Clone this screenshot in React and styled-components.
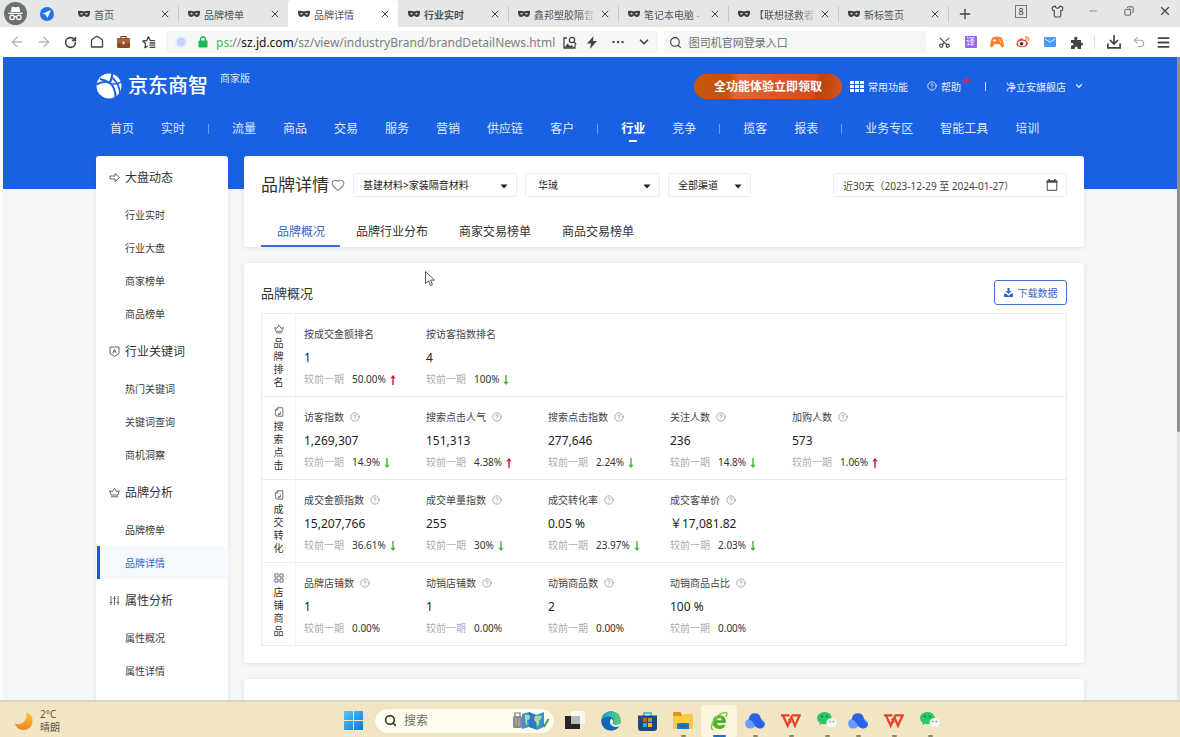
import React from "react";
import styled, { createGlobalStyle, css } from "styled-components";
import {
  ArrowLeft,
  ArrowRight,
  ChevronDown,
  CircleQuestionMark,
  Heart,
  Menu,
  Minus,
  Plus,
  RotateCw,
  Scissors,
  Search,
  Shirt,
  Undo2,
  X,
  Copy,
} from "lucide-react";

const GlobalStyle = createGlobalStyle`
  * {
    box-sizing: border-box;
  }

  body {
    margin: 0;
    overflow: hidden;
    font-family: "Noto Sans", "Noto Sans CJK SC", sans-serif;
    font-size: 10px;
    color: #333;
  }

  button, input, select {
    font-family: inherit;
    font-size: inherit;
    color: inherit;
    margin: 0;
    padding: 0;
    border: none;
    background: none;
    outline: none;
  }

  button {
    cursor: pointer;
  }

  a {
    color: inherit;
    text-decoration: none;
  }

  svg {
    display: block;
    flex-shrink: 0;
  }
`;

const Window = styled.div`
  display: flex;
  flex-direction: column;
  height: 100vh;
  background: #fff;
`;

/* browser tabs */

const TabBar = styled.div`
  display: flex;
  align-items: stretch;
  height: 27px;
  flex-shrink: 0;
  background: #e4e7e5;
`;

const Profile = styled.div`
  display: flex;
  align-items: center;
  gap: 13px;
  width: 68px;
  flex-shrink: 0;
  padding-left: 4px;
`;

const BrowserTab = styled.div`
  display: flex;
  align-items: center;
  gap: 4px;
  flex: 0 1 110px;
  min-width: 0;
  padding: 1px 8px 0 10px;
  color: #4c5560;
  border-radius: 3px 3px 0 0;
  background: ${(p) => (p.$active ? "#fff" : "transparent")};
`;

const TabLine = styled.span`
  align-self: center;
  width: 1px;
  height: 16px;
  margin-right: -1px;
  background: #c6c9c7;
`;

const TabLabel = styled.span`
  flex: 1;
  min-width: 0;
  white-space: nowrap;
  font-weight: ${(p) => (p.$bold ? 700 : 400)};
  mask-image: ${(p) =>
    p.$fade ? "linear-gradient(90deg, #000 75%, rgba(0, 0, 0, 0.3) 90%)" : "none"};
`;

const IconButton = styled.button`
  display: flex;
  align-items: center;
  justify-content: center;
  width: ${(p) => p.$w || 27}px;
  flex-shrink: 0;
  color: ${(p) => p.$color || "#444"};
`;

const WindowButtons = styled.div`
  display: flex;
  margin-left: auto;
  padding-bottom: 5px;
  width: 177px;
`;

const CountBox = styled.span`
  width: 12px;
  height: 13px;
  border: 1px solid #777;
  font-size: 9px;
  line-height: 11px;
  text-align: center;
`;

/* address bar */

const AddressBar = styled.div`
  display: flex;
  align-items: center;
  height: 30px;
  flex-shrink: 0;
  padding-left: 3px;
  background: #fff;
`;

const Field = styled.div`
  display: flex;
  align-items: center;
  height: 22px;
  min-width: 0;
  border-radius: 2px;
  background: #f5f7f6;
`;

const UrlField = styled(Field)`
  flex: 492 1 0;
  margin: 0 6px 0 4px;
  padding-left: 9px;
`;

const SearchField = styled(Field)`
  flex: 262 1 0;
  gap: 7px;
  padding-left: 5px;
  margin-right: 5px;
`;

const SiteBadge = styled.span`
  width: 12px;
  height: 12px;
  flex-shrink: 0;
  margin-right: 11px;
  border: 2px solid #e3eaff;
  border-radius: 50%;
  background: #c3d3ff;
`;

const Url = styled.div`
  flex: 1;
  min-width: 0;
  margin-left: 8px;
  white-space: nowrap;
  font-family: "Noto Sans", sans-serif;
  font-size: 12px;
  color: #7d807e;

  b {
    font-weight: 400;
    color: #111;
  }

  em {
    font-style: normal;
    color: #2fc46b;
  }
`;

const SearchInput = styled.input`
  flex: 1;
  min-width: 0;
  font-size: ${(p) => p.$size}px;

  &::placeholder {
    color: #6b6e6c;
    opacity: 1;
  }
`;

const Divider = styled.span`
  width: 1px;
  height: ${(p) => p.$h}px;
  flex-shrink: 0;
  margin-left: ${(p) => p.$before || 0}px;
  background: ${(p) => p.$color};
`;

const Extensions = styled.div`
  display: flex;
  align-items: center;
  width: 249px;
  flex-shrink: 0;
`;

/* page */

const Viewport = styled.div`
  display: flex;
  flex: 1;
  min-height: 0;
  overflow: hidden;
  padding-left: 3px;
  background: #fafbfa;
`;

const Page = styled.div`
  flex: 1;
  min-width: 0;
  overflow: hidden;
  background: linear-gradient(#1a61e2 132px, #f4f7f5 132px);
`;

const Scrollbar = styled.div`
  width: 3px;
  background: #e6e8e7;
`;

const Thumb = styled.div`
  height: 375px;
  border-radius: 0 0 2px 2px;
  background: #8f9190;
`;

const Container = styled.div`
  max-width: 988px;
  margin: 0 auto;
`;

const Brand = styled.div`
  display: flex;
  align-items: center;
  height: 58px;
  color: #fff;
`;

const BrandName = styled.h1`
  margin: 0 12px 0 6px;
  font-size: 20px;
  line-height: 26px;
  font-weight: 500;
`;

const Edition = styled.span`
  align-self: flex-start;
  padding-top: 14px;
  line-height: 14px;
  color: #dbe7ff;
`;

const BrandTools = styled.div`
  display: flex;
  align-items: center;
  margin-left: auto;
`;

const Promo = styled.button`
  width: 148px;
  height: 25px;
  margin-right: 8px;
  border-radius: 13px;
  font-size: 12px;
  font-weight: 700;
  color: #fff;
  background: linear-gradient(
    100deg,
    #c65a08 0%,
    #c4500f 24%,
    #e2683a 30%,
    #d9572a 55%,
    #d24e1d 80%,
    #b8420f 84%,
    #d9541f 100%
  );
`;

const ToolLink = styled.a`
  position: relative;
  display: flex;
  align-items: center;
  gap: 4px;
  color: #e8f0ff;
  margin-right: ${(p) => p.$after || 0}px;
`;

const ShopName = styled.span`
  margin: 0 4px 0 20px;
`;

const Dot = styled.span`
  position: absolute;
  top: -1px;
  right: -8px;
  width: 5px;
  height: 5px;
  border-radius: 50%;
  background: #f5222d;
`;

const Nav = styled.nav`
  display: flex;
  align-items: center;
  gap: 27px;
  height: 28px;
  margin-bottom: 13px;
  padding-left: 14px;
`;

const NavLink = styled.a`
  position: relative;
  font-size: 12px;
  line-height: 26px;
  white-space: nowrap;
  color: ${(p) => (p.$active ? "#fff" : "#dde8ff")};
  font-weight: ${(p) => (p.$active ? 700 : 400)};

  ${(p) =>
    p.$active &&
    css`
      &::after {
        content: "";
        position: absolute;
        left: 8px;
        right: 8px;
        bottom: 0;
        height: 2px;
        background: #fff;
      }
    `}
`;

const NavLine = styled.span`
  width: 1px;
  height: 10px;
  margin: 0 -4px;
  background: #6c9cf2;
`;

const Columns = styled.div`
  display: flex;
  gap: 16px;
  align-items: flex-start;
`;

const Sidebar = styled.aside`
  width: 132px;
  flex-shrink: 0;
  min-height: 560px;
  padding: 0 1px;
  border-radius: 3px;
  background: #fff;
  box-shadow: 0 1px 4px rgba(0, 0, 0, 0.08);
`;

const MenuTitle = styled.h2`
  display: flex;
  align-items: center;
  gap: 5px;
  height: 42px;
  margin: 0;
  padding-left: 12px;
  font-size: 12px;
  font-weight: 400;
  color: #333;
`;

const MenuItem = styled.a`
  display: flex;
  align-items: center;
  height: 33px;
  padding-left: 25px;
  border-left: 3px solid ${(p) => (p.$active ? "#1a56d6" : "transparent")};
  color: ${(p) => (p.$active ? "#2f66d0" : "#3c3c3c")};
  background: ${(p) => (p.$active ? "#f6fafe" : "transparent")};
`;

const Main = styled.main`
  display: flex;
  flex-direction: column;
  gap: 16px;
  flex: 1;
  min-width: 0;
`;

const Card = styled.section`
  padding: 17px 17px ${(p) => p.$bottom || 0}px;
  min-height: ${(p) => p.$min || 0}px;
  border-radius: 3px;
  background: #fff;
  box-shadow: 0 1px 4px rgba(0, 0, 0, 0.08);
`;

const Filters = styled.div`
  display: flex;
  align-items: center;
  gap: 8px;
  height: 24px;
`;

const Title = styled.h2`
  display: flex;
  align-items: center;
  gap: 2px;
  margin: 0;
  font-size: 17px;
  line-height: 26px;
  font-weight: 400;
  white-space: nowrap;

  svg {
    color: #888;
  }
`;

const SelectBox = styled.label`
  position: relative;
  width: ${(p) => p.$w}px;
  height: 24px;
  color: #222;

  select {
    width: 100%;
    height: 24px;
    padding: 0 ${(p) => p.$pad}px;
    appearance: none;
    border: 1px solid #eceeed;
    border-radius: 2px;
  }

  svg {
    position: absolute;
    right: 9px;
    top: 11px;
    pointer-events: none;
  }
`;

const DateBox = styled.label`
  display: flex;
  align-items: center;
  width: 234px;
  height: 24px;
  margin-left: auto;
  padding: 0 8px 0 9px;
  border: 1px solid #eceeed;
  border-radius: 2px;

  input {
    flex: 1;
    min-width: 0;
    color: #444;
  }
`;

const Tabs = styled.div`
  display: flex;
  margin-top: 17px;
`;

const Tab = styled.button`
  height: 33px;
  padding: 2px 15px 0 16px;
  font-size: 12px;
  color: ${(p) => (p.$active ? "#3568c6" : "#333")};
  border-bottom: 2px solid ${(p) => (p.$active ? "#3a6fcf" : "transparent")};
`;

const CardHead = styled.div`
  display: flex;
  align-items: center;
  justify-content: space-between;
  height: 25px;
  margin-bottom: 8px;
`;

const CardTitle = styled.h3`
  margin: 0;
  font-size: 13px;
  font-weight: 400;
`;

const Download = styled.button`
  display: flex;
  align-items: center;
  justify-content: center;
  gap: 5px;
  width: 73px;
  height: 25px;
  border: 1px solid #3f75d2;
  border-radius: 3px;
  color: #2f66cc;
`;

const Table = styled.table`
  width: 100%;
  border-collapse: collapse;

  tr {
    height: 83px;
  }

  th,
  td {
    padding: 0;
    border: 1px solid #ebedec;
    vertical-align: top;
    font-weight: 400;
    text-align: left;
  }

  th {
    width: 34px;
    border-right-color: #f3f4f4;
  }
`;

const RowName = styled.div`
  display: flex;
  flex-direction: column;
  align-items: center;
  gap: 3px;
  padding-top: 10px;

  span {
    width: 10px;
    line-height: 13px;
    word-break: break-all;
  }
`;

const Metrics = styled.div`
  display: flex;
  padding: 11px 0 9px 8px;
`;

const Metric = styled.div`
  width: 122px;
  white-space: nowrap;
`;

const MetricName = styled.div`
  display: flex;
  align-items: center;
  gap: 6px;
  line-height: 18px;
  color: #444;

  svg {
    color: #999;
  }
`;

const Value = styled.div`
  padding-top: 1px;
  font-size: 12px;
  line-height: 28px;
  color: #222;
`;

const Compare = styled.div`
  display: flex;
  align-items: center;
  line-height: 15px;
  color: #333;

  span {
    margin-right: 8px;
    color: #aeaeae;
  }

  svg {
    margin-left: 4px;
  }
`;

const Pointer = styled.svg`
  position: absolute;
  left: 424px;
  top: 270px;
`;

/* taskbar */

const Taskbar = styled.footer`
  display: flex;
  align-items: center;
  height: 37px;
  flex-shrink: 0;
  padding-top: 2px;
  border-top: 2px solid #d9d7bd;
  background: #f2e6c2;
`;

const Weather = styled.div`
  display: flex;
  align-items: center;
  gap: 6px;
  width: 335px;
  flex-shrink: 0;
  padding-left: 14px;
  line-height: 13px;
  color: #5c5646;
`;

const TaskSearch = styled.label`
  display: flex;
  align-items: center;
  gap: 7px;
  width: 179px;
  height: 24px;
  margin: 0 3px 0 4px;
  padding: 0 4px 0 9px;
  border-radius: 12px;
  background: #fffdf0;
  box-shadow: 0 0 1px #cfc39a;
`;

const TaskButton = styled.button`
  position: relative;
  display: flex;
  align-items: center;
  justify-content: center;
  width: 36px;
  height: 32px;
  margin-left: ${(p) => (p.$grouped ? -5 : 0)}px;
  border-radius: 3px;
  background: ${(p) => (p.$active ? "#fbf5e0" : "transparent")};

  ${(p) =>
    p.$open &&
    css`
      &::after {
        content: "";
        position: absolute;
        bottom: 0;
        width: ${p.$active ? 13 : 5}px;
        height: 2px;
        border-radius: 1px;
        background: ${p.$active ? "#1273c4" : "#8d8668"};
      }
    `}
`;

const Incognito = () => (
  <svg width="23" height="23" viewBox="0 0 24 24">
    <circle cx="12" cy="12" r="12" fill="#6d7073" />
    <path d="M8 5.5 9 5q3 1 6 0l1 .5 1 5H7zM4.500 11.200h15v1.300h-15z" fill="#fff" />
    <g fill="none" stroke="#fff" strokeWidth="1.300">
      <circle cx="8.500" cy="16" r="2.400" />
      <circle cx="15.500" cy="16" r="2.400" />
      <path d="M11 15.600q1-.8 2 0" />
    </g>
  </svg>
);

const PlaneBadge = () => (
  <svg width="14" height="14" viewBox="0 0 14 14">
    <circle cx="7" cy="7" r="7" fill="#2272e8" />
    <path d="M11 3 2.800 6.600l3 1.500 1.600 3z" fill="#fff" />
  </svg>
);

const Mask = () => (
  <svg width="12" height="12" viewBox="0 0 12 12">
    <path d="M0 3q3-.5 6 .6Q9 2.500 12 3q.3 6-3.200 6Q7 9 6 7.600 5 9 3.200 9-.3 9 0 3z" fill="#3d4146" />
    <ellipse cx="3.500" cy="5.700" rx="1.300" ry=".7" fill="#e4e7e5" />
    <ellipse cx="8.500" cy="5.700" rx="1.300" ry=".7" fill="#e4e7e5" />
  </svg>
);

const Home = () => (
  <svg width="14" height="14" viewBox="0 0 14 14" fill="none" stroke="#444" strokeWidth="1.300">
    <path d="M1.500 5.500Q1.500 5 2 4.600L5.500 2Q7 1 8.500 2L12 4.600q.5.400.5.900V12h-11z" strokeLinejoin="round" />
  </svg>
);

const Briefcase = () => (
  <svg width="15" height="14" viewBox="0 0 15 14">
    <path d="M5 3V1.500h5V3" fill="none" stroke="#7a3f22" strokeWidth="1.200" />
    <rect x="1" y="3" width="13" height="10" rx="1.200" fill="#8c4a2b" />
    <path d="M1 3.800h13v3.700q-6.500 2-13 0z" fill="#a9623c" />
    <rect x="6.500" y="6.700" width="2" height="2.600" fill="#f0e2c8" />
  </svg>
);

const StarList = () => (
  <svg width="14" height="13" viewBox="0 0 14 13" fill="none" stroke="#444" strokeWidth="1.300">
    <path d="M13 4.700 8.300 4.500 6.500.8 4.700 4.500.8 5l2.800 2.700-.7 4 3-1.700" strokeLinejoin="round" />
    <path d="M7.500 7h5.800M7.500 9.200h5.800M7.500 11.400h5.800" />
  </svg>
);

const Lock = () => (
  <svg width="10" height="12" viewBox="0 0 10 12">
    <path d="M2.500 5V3.500a2.500 2.500 0 0 1 5 0V5" fill="none" stroke="#18b854" strokeWidth="1.300" />
    <rect x=".5" y="4.500" width="9" height="7" rx="1" fill="#18b854" />
  </svg>
);

const ImageSearch = () => (
  <svg width="14" height="13" viewBox="0 0 14 13" fill="none" stroke="#444" strokeWidth="1.300">
    <path d="M4 2H1v10h11V8.500" />
    <circle cx="9" cy="4" r="2.600" />
    <path d="m11 6 2.200 2.200" />
    <path d="m2 11 2.500-3.500L7 10l1.500-1L11 11.500H2z" fill="#444" stroke="none" />
  </svg>
);

const Bolt = () => (
  <svg width="12" height="13" viewBox="0 0 12 13">
    <path d="M7.500 0 1 7.500h4L4 13l7-8H7z" fill="#444" />
  </svg>
);

const Dots = () => (
  <svg width="12" height="4" viewBox="0 0 12 4" fill="#444">
    <circle cx="1.500" cy="2" r="1.200" />
    <circle cx="6" cy="2" r="1.200" />
    <circle cx="10.500" cy="2" r="1.200" />
  </svg>
);

const TranslateBadge = styled.span`
  width: 12px;
  height: 12px;
  border-radius: 1px;
  background: #9466ee;
  color: #fff;
  font-size: 9px;
  line-height: 12px;
  text-align: center;
`;

const Gamepad = () => (
  <svg width="14" height="12" viewBox="0 0 14 12">
    <path d="M3 1.200Q7 0 11 1.200q2 1.500 3 8.300-.3 2.500-2 2L9.500 8.300h-5L2 11.500q-1.700.5-2-2Q1 2.700 3 1.200z" fill="#f58330" />
    <path d="M4.500 3v3M3 4.500h3M9 4h1.300M10 6h1.300" stroke="#fff" strokeWidth="1" />
  </svg>
);

const Weibo = () => (
  <svg width="14" height="12" viewBox="0 0 14 12">
    <path d="M5.500 2.300Q1 3.500.5 7.200.3 11 6 11.300q6-.2 6-4 0-1.600-1.700-2 .5-2-2.800-1.200.4-2.300-2-1.800z" fill="#e4543f" />
    <ellipse cx="6" cy="7.500" rx="4" ry="2.800" fill="#fff" />
    <circle cx="5.600" cy="7.800" r="1.800" fill="#333" />
    <path d="M9 .8q4.500 0 4 4M9.300 2.800q2 0 1.900 1.700" fill="none" stroke="#f0883d" strokeWidth="1.200" />
  </svg>
);

const Mail = () => (
  <svg width="12" height="10" viewBox="0 0 12 10">
    <rect width="12" height="10" rx="1" fill="#4c9cf6" />
    <path d="m1 2 5 3.200L11 2" fill="none" stroke="#d6eaff" strokeWidth="1" />
  </svg>
);

const Puzzle = () => (
  <svg width="13" height="13" viewBox="0 0 13 13">
    <path d="M1 4h3.500Q3.500.7 5.800.7T7.100 4H11v3q2-.6 2 1.200T11 9.500V13H7.700q.3-2.600-1.500-2.600T4.600 13H1V9.500q2.500.3 2.500-1.300T1 7z" fill="#444" />
  </svg>
);

const DownloadTray = () => (
  <svg width="14" height="14" viewBox="0 0 14 14" fill="none" stroke="#444" strokeWidth="1.700">
    <path d="M7 0v8.500M3 5l4 4 4-4M.9 8.500v4.400h12.200V8.500" />
  </svg>
);

const DownloadSolid = () => (
  <svg width="9" height="9" viewBox="0 0 9 9" fill="#2f66cc">
    <path d="M3.500 0h2v3h2l-3 3-3-3h2z" />
    <path d="M0 5.500h1.600L4.500 7.700l2.900-2.200H9V9H0z" />
  </svg>
);

const Globe = () => (
  <svg width="26" height="26" viewBox="0 0 26 26">
    <circle cx="13" cy="13" r="12.500" fill="#fff" />
    <g fill="none" stroke="#1a61e2">
      <path d="M0 11.500q9-4.500 14-1.500Q20 15 19.500 26" strokeWidth="2" />
      <path d="M13.500 10.500Q16 6 16.500 0" strokeWidth="2.200" />
      <path d="M14 10.500Q10 7 4 6" strokeWidth="1.800" />
      <path d="M16.500 5q6.500 5.500 7.500 15" strokeWidth="1.800" />
      <path d="M15 11q5 .5 11-2" strokeWidth="1.500" />
    </g>
  </svg>
);

const NineGrid = () => (
  <svg width="14" height="11" viewBox="0 0 14 11" fill="#fff">
    {[0, 4, 8].map((y) =>
      [0, 5, 10].map((x) => <rect key={`${x}-${y}`} x={x} y={y} width="4" height="3" />)
    )}
  </svg>
);

const Caret = () => (
  <svg width="8" height="5" viewBox="0 0 8 5">
    <path d="M.5.500h7L4 4.500z" fill="#222" />
  </svg>
);

const Calendar = () => (
  <svg width="12" height="12" viewBox="0 0 12 12">
    <path d="M1.200 2h9.600v9.300H1.200z" fill="none" stroke="#444" />
    <path d="M.7 1.500h10.600v2.200H.7z" fill="#444" />
    <path d="M3.200 0v2.500M8.800 0v2.500" stroke="#444" strokeWidth="1.500" />
  </svg>
);

/* small outline icons shared by the side menu and the table */
const outlines = {
  arrow: <path d="M1 4h5V1.500L10.500 5.500 6 9.500V7H1z" />,
  badge: (
    <>
      <path d="M1 1h9v6.500L5.500 10.300 1 7.500z" />
      <path d="M3.800 7 5.500 3.300 7.200 7M4.400 5.800h2.200" />
    </>
  ),
  crown: <path d="M2 8 .8 3.800l2.400 1L5.500 1.300l2.300 3.500 2.400-1L9 8zM2 9.800h7" />,
  sliders: (
    <path d="M2 1v9M5.500 1v9M9 1v9M.7 7.500h2.600M4.200 3.300h2.600M7.700 7.500h2.600" />
  ),
  sheet: (
    <>
      <path d="M4 .8h5.700v9.400H6M4 .8 1.500 3.200v4.300q0 2.700 3 2.700H6" />
      <path d="M4 .8v2.500H1.500M7 5v2.500H4.500M4 8.500h3" />
    </>
  ),
  blocks: <path d="M1 1h3.500v3.500H1zM6.500 1H10v3.500H6.500zM1 6.500h3.500V10H1zM6.500 6.500H10V10H6.500z" />,
};

const Outline = ({ name, size = 11 }) => (
  <svg width={size} height={size} viewBox="0 0 11 11" fill="none" stroke="#555" strokeWidth="0.900" strokeLinejoin="round">
    {outlines[name]}
  </svg>
);

const Trend = ({ up }) => (
  <svg width="6" height="10" viewBox="0 0 6 10" fill={up ? "#c41f2f" : "#45b53a"}>
    {up ? <path d="M3 0 5.700 3.200H3.700V10H2.300V3.200H.3z" /> : <path d="M3 10 .3 6.800h2V0h1.400v6.800h2z" />}
  </svg>
);

const Moon = () => (
  <svg width="20" height="20" viewBox="0 0 20 20">
    <defs>
      <linearGradient id="moon" x1="0" y1="0" x2="0" y2="1">
        <stop offset="0" stopColor="#f7c948" />
        <stop offset="1" stopColor="#ee8420" />
      </linearGradient>
    </defs>
    <path d="M12 1q7.500 3 6.500 10.500Q16.500 19 9.500 19 3 18.500.5 12.500 6 14.500 9.800 11 13.500 7 12 1z" fill="url(#moon)" />
  </svg>
);

const StartLogo = () => (
  <svg width="19" height="19" viewBox="0 0 19 19">
    <defs>
      <linearGradient id="start" gradientUnits="userSpaceOnUse" x1="0" y1="0" x2="19" y2="19">
        <stop offset="0" stopColor="#54c8f6" />
        <stop offset="1" stopColor="#0b76d3" />
      </linearGradient>
    </defs>
    <path d="M0 0h9v9H0zM10 0h9v9h-9zM0 10h9v9H0zM10 10h9v9h-9z" fill="url(#start)" />
  </svg>
);

const TravelArt = () => (
  <svg width="38" height="20" viewBox="0 0 38 20">
    <path d="M3 5V2h5v3" fill="none" stroke="#777" strokeWidth="1.200" />
    <rect x="1" y="5" width="9" height="12" rx="1.500" fill="#8a8c8c" />
    <path d="M4 7v8M7 7v8" stroke="#b9bbba" />
    <path d="m10 3 7-2 7 3 8-3v15l-7 3-8-3-7 2z" fill="#3e90d8" />
    <path d="m17 1 7 3v14l-7-2z" fill="#2c78c4" />
    <path d="M13 4q5-1 5 2t-3 3q1 4 0 6-2-3-2-6zM23 5q4-1 7 0-1 4-3 5 1 4-2 5-1-5-3-6z" fill="#a6d9a0" />
    <path d="m30 12 2.500 3L36.500 8" fill="none" stroke="#2f9b46" strokeWidth="1.800" />
  </svg>
);

const TaskView = () => (
  <svg width="20" height="19" viewBox="0 0 20 19">
    <rect x="6" y="0" width="14" height="13" fill="#f8f8f6" />
    <path d="M0 5h15v13H0z" fill="#262626" />
    <path d="M6 5h9v8H6z" fill="#b9b9b7" />
  </svg>
);

const Edge = () => (
  <svg width="20" height="20" viewBox="0 0 20 20">
    <defs>
      <linearGradient id="edge" x1="0" y1="0" x2="1" y2="0">
        <stop offset="0" stopColor="#1d9fdb" />
        <stop offset="1" stopColor="#5bd06c" />
      </linearGradient>
    </defs>
    <circle cx="10" cy="10" r="9.800" fill="#1565b8" />
    <path d="M.3 9Q1.500.2 10.500.2q8 .4 9.300 8.300.2 5-5 5-4 0-3-2 2-3-1.300-5.300Q5 4 .3 9z" fill="url(#edge)" />
    <path d="M10.500 7.500q-3 3-.5 6.500 4 3.500 9 .8l.8-3q-2 2-5 1.900-4-.2-3-2.200 1.200-2-1.300-4z" fill="#e9efd8" />
  </svg>
);

const Store = () => (
  <svg width="19" height="20" viewBox="0 0 19 20">
    <path d="M6 5V2h7v3" fill="none" stroke="#37a8e8" strokeWidth="1.500" />
    <path d="M0 4.500h19V17q0 3-3 3H3q-3 0-3-3z" fill="#1d4a7d" />
    <path d="M5 7h4v4H5z" fill="#f05022" />
    <path d="M10 7h4v4h-4z" fill="#7fba00" />
    <path d="M5 12h4v4H5z" fill="#28a8ea" />
    <path d="M10 12h4v4h-4z" fill="#ffb901" />
  </svg>
);

const Folder = () => (
  <svg width="20" height="18" viewBox="0 0 20 18">
    <path d="M0 1q0-1 1-1h6l2 2v4H0z" fill="#d8961c" />
    <path d="M0 4h9l2-2h8q1 0 1 1v13q0 1-1 1H1q-1 0-1-1z" fill="#fbcb45" />
    <path d="M4 12q0-1 1-1h10q1 0 1 1v5H4z" fill="#1b7bcd" />
    <path d="M6 14h8" stroke="#0c5794" />
  </svg>
);

const GreenBrowser = () => (
  <svg width="19" height="20" viewBox="0 0 19 20">
    <path d="M15.800 12H6.800q.6 2.600 3.200 2.600 1.800 0 2.800-1l2.700.4Q14 18 9.500 18 2.500 17.500 2.500 11 3 4.500 9.500 4q6.800.4 6.300 8zM6.800 9.300h5.300Q11.700 7 9.400 7 7.200 7.100 6.800 9.300z" fill="#4fb32a" fillRule="evenodd" />
    <path d="M3 19Q-1 17 5 8 12 0 16.500 1.800q1 1-.5 4" fill="none" stroke="#7ccb3f" strokeWidth="1.500" />
  </svg>
);

const Cloud = () => (
  <svg width="20" height="16" viewBox="0 0 20 16">
    <path d="M6 5.500Q.3 5.800 0 10.500.3 15.500 5.500 15.500q4 0 6-4z" fill="#6a9bff" />
    <path d="M14.500 5.500q5.300.8 5.500 5.300-.3 4.700-5 4.700-4-.3-6.500-4.500z" fill="#82b1ff" />
    <path d="M3.800 6.200Q4.500.3 10 .3q5 .2 5.700 4.700.5 3 4.300 5.500-.5 4.800-5 5-3.500-.2-5.500-3.500-2.200-4.500-5.700-5.800z" fill="#2c60e6" />
  </svg>
);

const Wps = () => (
  <svg width="20" height="14" viewBox="0 0 20 14" fill="none" stroke="#e8432a" strokeWidth="2.200">
    <path d="M0 1.300h8.500M2 1.500l4.700 10.300L10.500 3 14 11.800 18.500 1.500M11 1.300h8.800M8 4.800l1.800 4" />
  </svg>
);

const Wechat = () => (
  <svg width="20" height="17" viewBox="0 0 20 17">
    <path d="M7.500 0q7 .5 7.300 6.200Q14.500 12 7.500 12.200l-2.700-.5-2.500 1.600.5-2.500Q0 9 0 6 .5.500 7.500 0z" fill="#2bc665" />
    <circle cx="5" cy="4.300" r=".9" fill="#17633a" />
    <circle cx="10" cy="4.300" r=".9" fill="#17633a" />
    <path d="M14.500 6q5 .4 5.500 4.800-.2 2.200-2 3.400l.4 1.800-2-1q-6.500.8-7-4.200.3-4.500 5.100-4.800z" fill="#f4f6f5" />
    <circle cx="12.800" cy="9.500" r=".7" fill="#777" />
    <circle cx="16.300" cy="9.500" r=".7" fill="#777" />
  </svg>
);

const browserTabs = [
  { label: "首页" },
  { label: "品牌榜单", line: true },
  { label: "品牌详情", active: true },
  { label: "行业实时", bold: true },
  { label: "鑫邦塑胶隔音", line: true, fade: true },
  { label: "笔记本电脑 -", line: true, fade: true },
  { label: "【联想拯救者", line: true, fade: true },
  { label: "新标签页", line: true },
];

const nav = [
  "首页", "实时", "|", "流量", "商品", "交易", "服务", "营销", "供应链", "客户", "|",
  "行业", "竞争", "|", "揽客", "报表", "|", "业务专区", "智能工具", "培训",
];

const menu = [
  { title: "大盘动态", icon: "arrow", items: ["行业实时", "行业大盘", "商家榜单", "商品榜单"] },
  { title: "行业关键词", icon: "badge", items: ["热门关键词", "关键词查询", "商机洞察"] },
  { title: "品牌分析", icon: "crown", items: ["品牌榜单", "品牌详情"] },
  { title: "属性分析", icon: "sliders", items: ["属性概况", "属性详情"] },
];

const rows = [
  {
    name: "品牌排名",
    icon: "crown",
    metrics: [
      { name: "按成交金额排名", value: "1", rate: "50.00%", trend: "up", noHelp: true },
      { name: "按访客指数排名", value: "4", rate: "100%", trend: "down", noHelp: true },
    ],
  },
  {
    name: "搜索点击",
    icon: "sheet",
    metrics: [
      { name: "访客指数", value: "1,269,307", rate: "14.9%", trend: "down" },
      { name: "搜索点击人气", value: "151,313", rate: "4.38%", trend: "up" },
      { name: "搜索点击指数", value: "277,646", rate: "2.24%", trend: "down" },
      { name: "关注人数", value: "236", rate: "14.8%", trend: "down" },
      { name: "加购人数", value: "573", rate: "1.06%", trend: "up" },
    ],
  },
  {
    name: "成交转化",
    icon: "sheet",
    metrics: [
      { name: "成交金额指数", value: "15,207,766", rate: "36.61%", trend: "down" },
      { name: "成交单量指数", value: "255", rate: "30%", trend: "down" },
      { name: "成交转化率", value: "0.05 %", rate: "23.97%", trend: "down" },
      { name: "成交客单价", value: "￥17,081.82", rate: "2.03%", trend: "down" },
    ],
  },
  {
    name: "店铺商品",
    icon: "blocks",
    metrics: [
      { name: "品牌店铺数", value: "1", rate: "0.00%" },
      { name: "动销店铺数", value: "1", rate: "0.00%" },
      { name: "动销商品数", value: "2", rate: "0.00%" },
      { name: "动销商品占比", value: "100 %", rate: "0.00%" },
    ],
  },
];

const tasks = [
  { name: "任务视图", icon: <TaskView /> },
  { name: "Edge", icon: <Edge /> },
  { name: "商店", icon: <Store /> },
  { name: "文件", icon: <Folder />, open: true },
  { name: "浏览器", icon: <GreenBrowser />, open: true, active: true },
  { name: "网盘", icon: <Cloud />, open: true },
  { name: "WPS", icon: <Wps />, open: true },
  { name: "微信", icon: <Wechat />, open: true },
  { name: "网盘 2", icon: <Cloud />, open: true, grouped: true },
  { name: "WPS 2", icon: <Wps />, open: true },
  { name: "微信 2", icon: <Wechat />, open: true },
];

const BrowserTop = () => (
  <>
    <TabBar>
      <Profile>
        <Incognito />
        <PlaneBadge />
      </Profile>
      {browserTabs.map((t) => (
        <React.Fragment key={t.label}>
          {t.line && <TabLine />}
          <BrowserTab $active={t.active}>
            <Mask />
            <TabLabel $bold={t.bold} $fade={t.fade}>{t.label}</TabLabel>
            <IconButton $w={10} aria-label="关闭标签"><X size={12} strokeWidth={2} /></IconButton>
          </BrowserTab>
        </React.Fragment>
      ))}
      <TabLine />
      <IconButton $w={34} aria-label="新建标签"><Plus size={16} strokeWidth={2} /></IconButton>
      <WindowButtons>
        <IconButton $w={36} aria-label="标签数"><CountBox>8</CountBox></IconButton>
        <IconButton $w={36} aria-label="皮肤"><Shirt size={13} /></IconButton>
        <IconButton $w={36} $color="#888" aria-label="最小化"><Minus size={12} /></IconButton>
        <IconButton $w={36} aria-label="还原"><Copy size={10} style={{ transform: "scaleX(-1)" }} /></IconButton>
        <IconButton $w={36} aria-label="关闭"><X size={14} strokeWidth={2} /></IconButton>
      </WindowButtons>
    </TabBar>
    <AddressBar>
      <IconButton $color="#b5b7b6" aria-label="后退"><ArrowLeft size={16} /></IconButton>
      <IconButton $color="#b5b7b6" aria-label="前进"><ArrowRight size={16} /></IconButton>
      <IconButton aria-label="刷新"><RotateCw size={13} strokeWidth={3} /></IconButton>
      <IconButton $w={26} aria-label="主页"><Home /></IconButton>
      <IconButton $w={26} aria-label="工具箱"><Briefcase /></IconButton>
      <IconButton $w={26} aria-label="收藏"><StarList /></IconButton>
      <UrlField>
        <SiteBadge />
        <Lock />
        <Url><em>ps</em>://<b>sz.jd.com</b>/sz/view/industryBrand/brandDetailNews.html</Url>
        <IconButton $w={18} aria-label="识图"><ImageSearch /></IconButton>
        <IconButton $w={26} aria-label="加速"><Bolt /></IconButton>
        <IconButton $w={26} aria-label="更多"><Dots /></IconButton>
        <IconButton aria-label="展开"><ChevronDown size={14} strokeWidth={3} /></IconButton>
      </UrlField>
      <SearchField as="label">
        <Search size={13} />
        <SearchInput $size={11} placeholder="图司机官网登录入口" aria-label="搜索" />
      </SearchField>
      <Extensions>
        <IconButton $w={26} aria-label="截图"><Scissors size={13} style={{ transform: "rotate(-90deg)" }} /></IconButton>
        <IconButton aria-label="翻译"><TranslateBadge>译</TranslateBadge></IconButton>
        <IconButton $w={26} aria-label="游戏"><Gamepad /></IconButton>
        <IconButton $w={26} aria-label="微博"><Weibo /></IconButton>
        <IconButton aria-label="邮箱"><Mail /></IconButton>
        <IconButton $w={26} aria-label="扩展"><Puzzle /></IconButton>
        <Divider $h={13} $before={5} $color="#dcdedd" />
        <IconButton $w={37} aria-label="下载"><DownloadTray /></IconButton>
        <IconButton $w={14} $color="#aaa" aria-label="恢复"><Undo2 size={14} /></IconButton>
        <IconButton $w={34} aria-label="菜单"><Menu size={15} strokeWidth={3} /></IconButton>
      </Extensions>
    </AddressBar>
  </>
);

const Header = () => (
  <>
    <Brand>
      <Globe />
      <BrandName>京东商智</BrandName>
      <Edition>商家版</Edition>
      <BrandTools>
        <Promo>全功能体验立即领取</Promo>
        <ToolLink href="#" $after={19}><NineGrid />常用功能</ToolLink>
        <ToolLink href="#" $after={24}><CircleQuestionMark size={10} />帮助<Dot /></ToolLink>
        <Divider $h={9} $color="#c9dbff" />
        <ToolLink href="#"><ShopName>净立安旗舰店</ShopName><ChevronDown size={10} strokeWidth={3} /></ToolLink>
      </BrandTools>
    </Brand>
    <Nav>
      {nav.map((item, i) =>
        item === "|" ? (
          <NavLine key={i} />
        ) : (
          <NavLink key={i} href="#" $active={item === "行业"}>{item}</NavLink>
        )
      )}
    </Nav>
  </>
);

const SideMenu = () => (
  <Sidebar>
    {menu.map((group) => (
      <div key={group.title}>
        <MenuTitle><Outline name={group.icon} />{group.title}</MenuTitle>
        {group.items.map((item) => (
          <MenuItem key={item} href="#" $active={item === "品牌详情"}>{item}</MenuItem>
        ))}
      </div>
    ))}
  </Sidebar>
);

const FilterCard = () => (
  <Card>
    <Filters>
      <Title>品牌详情<Heart size={14} strokeWidth={2} /></Title>
      <SelectBox $w={164} $pad={9}>
        <select aria-label="类目"><option>基建材料&gt;家装隔音材料</option></select>
        <Caret />
      </SelectBox>
      <SelectBox $w={135} $pad={12}>
        <select aria-label="品牌"><option>华珹</option></select>
        <Caret />
      </SelectBox>
      <SelectBox $w={83} $pad={9}>
        <select aria-label="渠道"><option>全部渠道</option></select>
        <Caret />
      </SelectBox>
      <DateBox>
        <input readOnly aria-label="日期" value="近30天（2023-12-29 至 2024-01-27）" />
        <Calendar />
      </DateBox>
    </Filters>
    <Tabs>
      <Tab $active>品牌概况</Tab>
      <Tab>品牌行业分布</Tab>
      <Tab>商家交易榜单</Tab>
      <Tab>商品交易榜单</Tab>
    </Tabs>
  </Card>
);

const OverviewCard = () => (
  <Card $bottom={17}>
    <CardHead>
      <CardTitle>品牌概况</CardTitle>
      <Download><DownloadSolid />下载数据</Download>
    </CardHead>
    <Table>
      <tbody>
        {rows.map((row) => (
          <tr key={row.name}>
            <th scope="row">
              <RowName><Outline name={row.icon} size={10} /><span>{row.name}</span></RowName>
            </th>
            <td>
              <Metrics>
                {row.metrics.map((m) => (
                  <Metric key={m.name}>
                    <MetricName>{m.name}{!m.noHelp && <CircleQuestionMark size={10} />}</MetricName>
                    <Value>{m.value}</Value>
                    <Compare>
                      <span>较前一期</span>{m.rate}
                      {m.trend && <Trend up={m.trend === "up"} />}
                    </Compare>
                  </Metric>
                ))}
              </Metrics>
            </td>
          </tr>
        ))}
      </tbody>
    </Table>
  </Card>
);

const BottomBar = () => (
  <Taskbar>
    <Weather>
      <Moon />
      <div>2°C<br />晴朗</div>
    </Weather>
    <TaskButton aria-label="开始"><StartLogo /></TaskButton>
    <TaskSearch>
      <Search size={13} strokeWidth={3} color="#333" />
      <SearchInput $size={12} placeholder="搜索" aria-label="搜索" />
      <TravelArt />
    </TaskSearch>
    {tasks.map((t) => (
      <TaskButton key={t.name} aria-label={t.name} $open={t.open} $active={t.active} $grouped={t.grouped}>
        {t.icon}
      </TaskButton>
    ))}
  </Taskbar>
);

const App = () => {
  return (
    <Window>
      <GlobalStyle />
      <BrowserTop />
      <Viewport>
        <Page>
          <Container>
            <Header />
            <Columns>
              <SideMenu />
              <Main>
                <FilterCard />
                <OverviewCard />
                <Card $min={60} />
              </Main>
            </Columns>
          </Container>
        </Page>
        <Scrollbar><Thumb /></Scrollbar>
      </Viewport>
      <BottomBar />
      <Pointer width="12" height="18" viewBox="0 0 12 18">
        <path d="M1.500 1.500v12l3-2.700 2 4.700 2-.9-2-4.500h4z" fill="#fff" stroke="#555" />
      </Pointer>
    </Window>
  );
};

export default App;
